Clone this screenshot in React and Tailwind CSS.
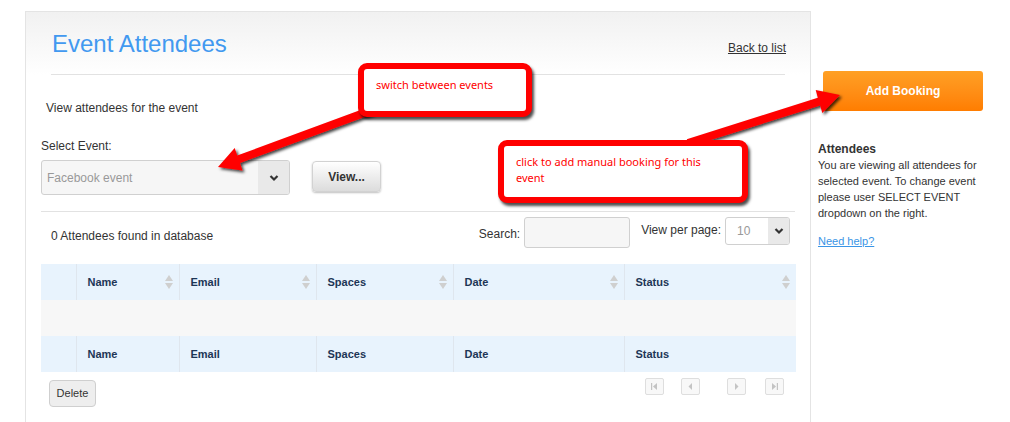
import React from "react";

const SortIcon = () => (
  <svg width="8" height="16" viewBox="0 0 8 16" className="shrink-0">
    <path d="M4 1 L8 7 L0 7 Z" fill="#cfcfcf" />
    <path d="M4 15 L8 9 L0 9 Z" fill="#cfcfcf" />
  </svg>
);

const Chevron = () => (
  <svg width="10" height="8" viewBox="0 0 10 8">
    <path d="M1.5 2 L5 5.5 L8.5 2" fill="none" stroke="#333" strokeWidth="2.2" />
  </svg>
);

const PageBtn = ({ kind }) => (
  <div className="w-[19px] h-[17px] border border-[#dedede] rounded-[2px] bg-[#f8f8f8] flex items-center justify-center">
    <svg width="9" height="9" viewBox="0 0 9 9">
      {kind === "first" && (
        <>
          <rect x="1" y="1" width="1.2" height="7" fill="#c4c4c4" />
          <path d="M7 1 L3 4.5 L7 8 Z" fill="#c4c4c4" />
        </>
      )}
      {kind === "prev" && <path d="M6 1 L2.5 4.5 L6 8 Z" fill="#c4c4c4" />}
      {kind === "next" && <path d="M3 1 L6.5 4.5 L3 8 Z" fill="#c4c4c4" />}
      {kind === "last" && (
        <>
          <path d="M2 1 L6 4.5 L2 8 Z" fill="#c4c4c4" />
          <rect x="6.8" y="1" width="1.2" height="7" fill="#c4c4c4" />
        </>
      )}
    </svg>
  </div>
);

const columns = [
  { name: "", w: "w-[35px]", sort: false },
  { name: "Name", w: "w-[103px]", sort: true },
  { name: "Email", w: "w-[137px]", sort: true },
  { name: "Spaces", w: "w-[137px]", sort: true },
  { name: "Date", w: "w-[171px]", sort: true },
  { name: "Status", w: "w-[172px]", sort: true },
];

const HeadRow = ({ sort }) => (
  <tr className="h-[36px] bg-[#e8f3fd]">
    {columns.map((c, i) => (
      <th
        key={i}
        className={`${c.w} p-0 text-left font-bold text-[11px] text-[#1d3656] ${
          i > 0 ? "border-l border-[#dfe6ee]" : ""
        }`}
      >
        {c.name && (
          <div className="flex items-center justify-between pl-[11px] pr-[6px]">
            <span>{c.name}</span>
            {sort && c.sort && <SortIcon />}
          </div>
        )}
      </th>
    ))}
  </tr>
);

export default function App() {
  return (
    <div
      className="relative w-[1010px] h-[422px] overflow-hidden bg-white text-[#333]"
      style={{ fontFamily: '"Liberation Sans", Arial, sans-serif' }}
    >
      <div className="flex pt-[11px] pl-[25px] h-full">
        {/* main panel */}
        <div className="w-[786px] h-[430px] border border-[#e4e4e4] shrink-0">
          <div className="bg-gradient-to-b from-[#f1f1f1] to-white pt-[12px] px-[25px]">
            <div className="flex items-center justify-between h-[40px] pb-0">
              <h1 className="text-[24px] leading-[32px] text-[#4299f0] pl-[1px]">Event Attendees</h1>
              <a className="text-[12px] underline text-[#333] mt-[7px] mr-[-1px]">Back to list</a>
            </div>
            <div className="h-[11px] border-b border-[#e2e2e2]" />
          </div>

          <div className="px-[15px]">
            <p className="mt-[25px] pl-[5px] text-[12px] leading-[16px]">View attendees for the event</p>
            <p className="mt-[22px] text-[12px] leading-[16px]">Select Event:</p>
            <div className="flex items-start mt-[6px]">
              <div className="w-[249px] h-[35px] border border-[#d0d0d0] rounded-[3px] bg-[#f6f6f6] flex overflow-hidden">
                <div className="flex-1 flex items-center pl-[5px] text-[12px] text-[#999]">Facebook event</div>
                <div className="w-[31px] bg-[#e9e9e9] flex items-center justify-center">
                  <Chevron />
                </div>
              </div>
              <button className="ml-[22px] mt-[1px] w-[69px] h-[31px] rounded-[4px] border border-[#d2d2d2] bg-gradient-to-b from-white to-[#dcdcdc] shadow-[0_1px_2px_rgba(0,0,0,0.25)] text-[12px] font-bold text-[#333]">
                View...
              </button>
            </div>

            <div className="mt-[16px] w-[754px] border-t border-[#e2e2e2]" />

            <div className="flex items-start mt-[5px] w-[754px]">
              <p className="mt-[11px] pl-[10px] text-[12px] leading-[16px]">0 Attendees found in database</p>
              <div className="ml-auto mr-[5px] flex items-start">
                <span className="mt-[9px] text-[12px] leading-[16px]">Search:</span>
                <div className="ml-[4px] w-[106px] h-[31px] border border-[#d0d0d0] rounded-[3px] bg-[#f6f6f6]" />
                <span className="ml-[11px] mt-[5px] text-[12px] leading-[16px]">View per page:</span>
                <div className="ml-[4px] w-[65px] h-[28px] border border-[#d0d0d0] rounded-[3px] bg-white flex overflow-hidden">
                  <div className="flex-1 flex items-center pl-[11px] text-[12px] text-[#999]">10</div>
                  <div className="w-[21px] bg-[#e9e9e9] flex items-center justify-center">
                    <Chevron />
                  </div>
                </div>
              </div>
            </div>

            <table className="mt-[16px] w-[755px] border-collapse table-fixed">
              <thead>
                <HeadRow sort />
              </thead>
              <tbody>
                <tr className="h-[36px] bg-[#f7f7f7]">
                  <td colSpan={6} />
                </tr>
              </tbody>
              <tfoot>
                <HeadRow sort={false} />
              </tfoot>
            </table>

            <div className="flex items-start w-[755px]">
              <button className="ml-[8px] mt-[8px] w-[47px] h-[27px] rounded-[4px] border border-[#cfcfcf] bg-[#eeeeee] text-[11px] text-[#333]">
                Delete
              </button>
              <div className="ml-auto mt-[6px] mr-[12px] flex">
                <PageBtn kind="first" />
                <div className="ml-[17px]"><PageBtn kind="prev" /></div>
                <div className="ml-[27px]"><PageBtn kind="next" /></div>
                <div className="ml-[19px]"><PageBtn kind="last" /></div>
              </div>
            </div>
          </div>
        </div>

        {/* sidebar */}
        <div className="w-[170px] pl-[7px] shrink-0">
          <button className="mt-[60px] ml-[5px] w-[160px] h-[40px] rounded-[3px] bg-gradient-to-b from-[#ffa024] to-[#ff7d00] text-white text-[12px] font-bold">
            Add Booking
          </button>
          <h3 className="mt-[30px] text-[12px] leading-[16px] font-bold text-[#333]">Attendees</h3>
          <p className="text-[11px] leading-[16px] text-[#333]">
            You are viewing all attendees for selected event. To change event please user SELECT EVENT dropdown on the right.
          </p>
          <a className="block mt-[12px] text-[11px] leading-[16px] text-[#3a95e6] underline">Need help?</a>
        </div>
      </div>

      {/* annotation arrows */}
      <svg className="absolute inset-0 pointer-events-none" width="1010" height="422">
        <defs>
          <filter id="sh" x="-20%" y="-20%" width="140%" height="140%">
            <feDropShadow dx="2" dy="2" stdDeviation="1.6" floodColor="#000" floodOpacity="0.75" />
          </filter>
        </defs>
        <polygon
          points="373.4,113.7 240,163 242.5,170.6 218,167 234.7,148 237.2,155.6 370.6,106.3"
          fill="#f00"
          filter="url(#sh)"
        />
        <polygon
          points="689.2,146.8 820.2,105.4 822.3,113.1 840,95 815.7,90.1 817.8,97.8 686.8,139.2"
          fill="#f00"
          filter="url(#sh)"
        />
      </svg>

      {/* annotation callouts */}
      <div
        className="absolute left-[358px] top-[63px] w-[174px] h-[54px] border-[6px] border-[#f00] rounded-[9px] bg-white shadow-[2px_3px_3px_rgba(0,0,0,0.7)] pl-[12px] pt-[8px]"
        style={{ fontFamily: '"Noto Sans", "DejaVu Sans", sans-serif' }}
      >
        <p className="text-[11px] leading-[16px] text-[#f00]">switch between events</p>
      </div>
      <div
        className="absolute left-[498px] top-[140px] w-[250px] h-[63px] border-[6px] border-[#f00] rounded-[9px] bg-white shadow-[2px_3px_3px_rgba(0,0,0,0.7)] pl-[12px] pt-[8px] pr-[20px]"
        style={{ fontFamily: '"Noto Sans", "DejaVu Sans", sans-serif' }}
      >
        <p className="text-[11px] leading-[16px] text-[#f00]">click to add manual booking for this event</p>
      </div>
    </div>
  );
}
